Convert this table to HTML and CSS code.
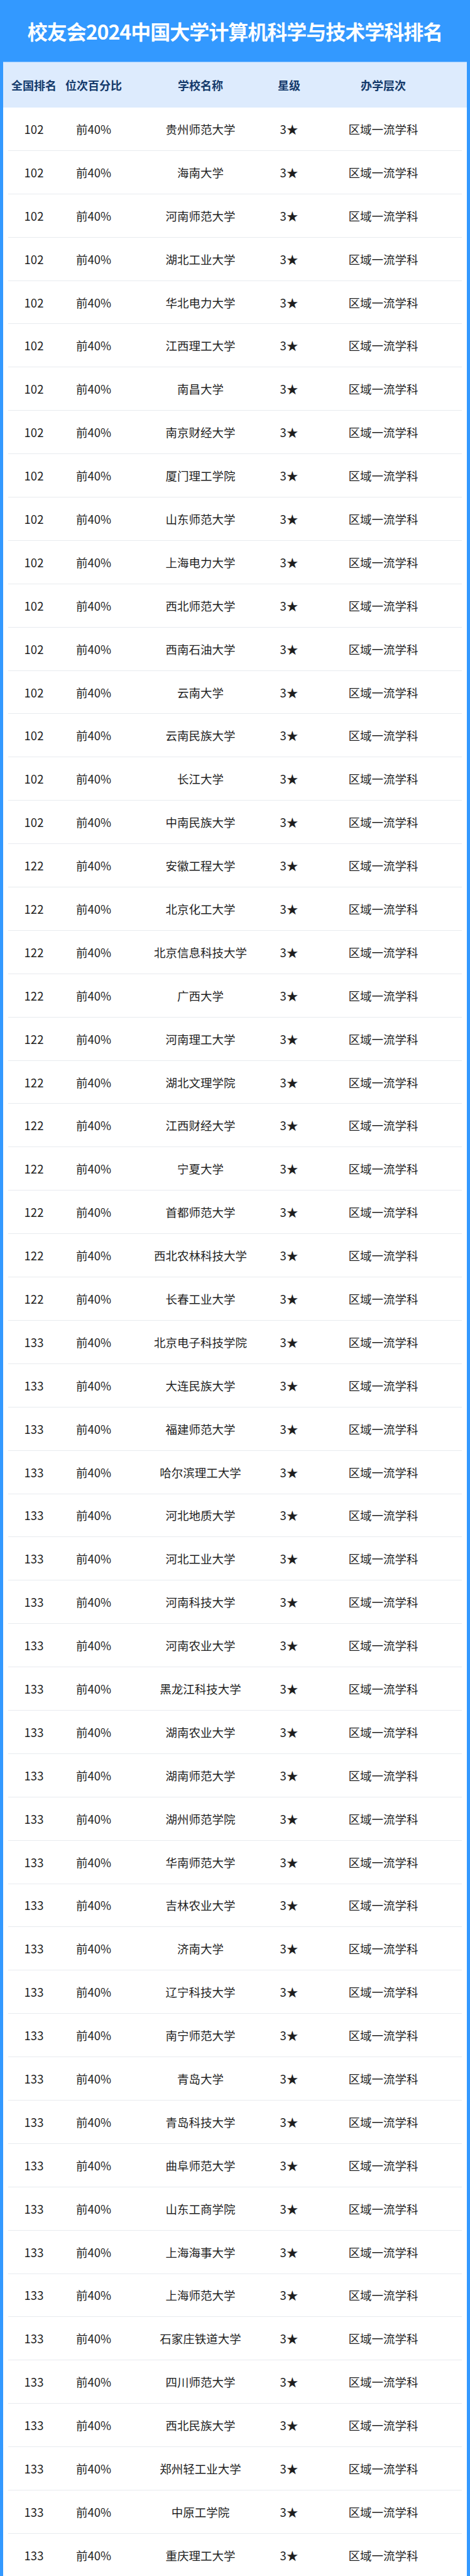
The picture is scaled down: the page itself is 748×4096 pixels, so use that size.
FILE: index.html
```html
<!DOCTYPE html>
<html lang="zh-CN">
<head>
<meta charset="utf-8">
<title>校友会2024中国大学计算机科学与技术学科排名</title>
<link rel="stylesheet" href="styles.css">
</head>
<body>
<div class="frame">
  <h1 class="title">校友会2024中国大学计算机科学与技术学科排名</h1>
  <div class="panel">
    <div class="thead">
      <div class="grid">
        <span>全国排名</span><span>位次百分比</span><span>学校名称</span><span>星级</span><span>办学层次</span>
      </div>
    </div>
    <div class="tbody">
      <div class="grid row"><span>102</span><span>前40%</span><span>贵州师范大学</span><span>3★</span><span>区域一流学科</span></div>
      <div class="grid row"><span>102</span><span>前40%</span><span>海南大学</span><span>3★</span><span>区域一流学科</span></div>
      <div class="grid row"><span>102</span><span>前40%</span><span>河南师范大学</span><span>3★</span><span>区域一流学科</span></div>
      <div class="grid row"><span>102</span><span>前40%</span><span>湖北工业大学</span><span>3★</span><span>区域一流学科</span></div>
      <div class="grid row"><span>102</span><span>前40%</span><span>华北电力大学</span><span>3★</span><span>区域一流学科</span></div>
      <div class="grid row"><span>102</span><span>前40%</span><span>江西理工大学</span><span>3★</span><span>区域一流学科</span></div>
      <div class="grid row"><span>102</span><span>前40%</span><span>南昌大学</span><span>3★</span><span>区域一流学科</span></div>
      <div class="grid row"><span>102</span><span>前40%</span><span>南京财经大学</span><span>3★</span><span>区域一流学科</span></div>
      <div class="grid row"><span>102</span><span>前40%</span><span>厦门理工学院</span><span>3★</span><span>区域一流学科</span></div>
      <div class="grid row"><span>102</span><span>前40%</span><span>山东师范大学</span><span>3★</span><span>区域一流学科</span></div>
      <div class="grid row"><span>102</span><span>前40%</span><span>上海电力大学</span><span>3★</span><span>区域一流学科</span></div>
      <div class="grid row"><span>102</span><span>前40%</span><span>西北师范大学</span><span>3★</span><span>区域一流学科</span></div>
      <div class="grid row"><span>102</span><span>前40%</span><span>西南石油大学</span><span>3★</span><span>区域一流学科</span></div>
      <div class="grid row"><span>102</span><span>前40%</span><span>云南大学</span><span>3★</span><span>区域一流学科</span></div>
      <div class="grid row"><span>102</span><span>前40%</span><span>云南民族大学</span><span>3★</span><span>区域一流学科</span></div>
      <div class="grid row"><span>102</span><span>前40%</span><span>长江大学</span><span>3★</span><span>区域一流学科</span></div>
      <div class="grid row"><span>102</span><span>前40%</span><span>中南民族大学</span><span>3★</span><span>区域一流学科</span></div>
      <div class="grid row"><span>122</span><span>前40%</span><span>安徽工程大学</span><span>3★</span><span>区域一流学科</span></div>
      <div class="grid row"><span>122</span><span>前40%</span><span>北京化工大学</span><span>3★</span><span>区域一流学科</span></div>
      <div class="grid row"><span>122</span><span>前40%</span><span>北京信息科技大学</span><span>3★</span><span>区域一流学科</span></div>
      <div class="grid row"><span>122</span><span>前40%</span><span>广西大学</span><span>3★</span><span>区域一流学科</span></div>
      <div class="grid row"><span>122</span><span>前40%</span><span>河南理工大学</span><span>3★</span><span>区域一流学科</span></div>
      <div class="grid row"><span>122</span><span>前40%</span><span>湖北文理学院</span><span>3★</span><span>区域一流学科</span></div>
      <div class="grid row"><span>122</span><span>前40%</span><span>江西财经大学</span><span>3★</span><span>区域一流学科</span></div>
      <div class="grid row"><span>122</span><span>前40%</span><span>宁夏大学</span><span>3★</span><span>区域一流学科</span></div>
      <div class="grid row"><span>122</span><span>前40%</span><span>首都师范大学</span><span>3★</span><span>区域一流学科</span></div>
      <div class="grid row"><span>122</span><span>前40%</span><span>西北农林科技大学</span><span>3★</span><span>区域一流学科</span></div>
      <div class="grid row"><span>122</span><span>前40%</span><span>长春工业大学</span><span>3★</span><span>区域一流学科</span></div>
      <div class="grid row"><span>133</span><span>前40%</span><span>北京电子科技学院</span><span>3★</span><span>区域一流学科</span></div>
      <div class="grid row"><span>133</span><span>前40%</span><span>大连民族大学</span><span>3★</span><span>区域一流学科</span></div>
      <div class="grid row"><span>133</span><span>前40%</span><span>福建师范大学</span><span>3★</span><span>区域一流学科</span></div>
      <div class="grid row"><span>133</span><span>前40%</span><span>哈尔滨理工大学</span><span>3★</span><span>区域一流学科</span></div>
      <div class="grid row"><span>133</span><span>前40%</span><span>河北地质大学</span><span>3★</span><span>区域一流学科</span></div>
      <div class="grid row"><span>133</span><span>前40%</span><span>河北工业大学</span><span>3★</span><span>区域一流学科</span></div>
      <div class="grid row"><span>133</span><span>前40%</span><span>河南科技大学</span><span>3★</span><span>区域一流学科</span></div>
      <div class="grid row"><span>133</span><span>前40%</span><span>河南农业大学</span><span>3★</span><span>区域一流学科</span></div>
      <div class="grid row"><span>133</span><span>前40%</span><span>黑龙江科技大学</span><span>3★</span><span>区域一流学科</span></div>
      <div class="grid row"><span>133</span><span>前40%</span><span>湖南农业大学</span><span>3★</span><span>区域一流学科</span></div>
      <div class="grid row"><span>133</span><span>前40%</span><span>湖南师范大学</span><span>3★</span><span>区域一流学科</span></div>
      <div class="grid row"><span>133</span><span>前40%</span><span>湖州师范学院</span><span>3★</span><span>区域一流学科</span></div>
      <div class="grid row"><span>133</span><span>前40%</span><span>华南师范大学</span><span>3★</span><span>区域一流学科</span></div>
      <div class="grid row"><span>133</span><span>前40%</span><span>吉林农业大学</span><span>3★</span><span>区域一流学科</span></div>
      <div class="grid row"><span>133</span><span>前40%</span><span>济南大学</span><span>3★</span><span>区域一流学科</span></div>
      <div class="grid row"><span>133</span><span>前40%</span><span>辽宁科技大学</span><span>3★</span><span>区域一流学科</span></div>
      <div class="grid row"><span>133</span><span>前40%</span><span>南宁师范大学</span><span>3★</span><span>区域一流学科</span></div>
      <div class="grid row"><span>133</span><span>前40%</span><span>青岛大学</span><span>3★</span><span>区域一流学科</span></div>
      <div class="grid row"><span>133</span><span>前40%</span><span>青岛科技大学</span><span>3★</span><span>区域一流学科</span></div>
      <div class="grid row"><span>133</span><span>前40%</span><span>曲阜师范大学</span><span>3★</span><span>区域一流学科</span></div>
      <div class="grid row"><span>133</span><span>前40%</span><span>山东工商学院</span><span>3★</span><span>区域一流学科</span></div>
      <div class="grid row"><span>133</span><span>前40%</span><span>上海海事大学</span><span>3★</span><span>区域一流学科</span></div>
      <div class="grid row"><span>133</span><span>前40%</span><span>上海师范大学</span><span>3★</span><span>区域一流学科</span></div>
      <div class="grid row"><span>133</span><span>前40%</span><span>石家庄铁道大学</span><span>3★</span><span>区域一流学科</span></div>
      <div class="grid row"><span>133</span><span>前40%</span><span>四川师范大学</span><span>3★</span><span>区域一流学科</span></div>
      <div class="grid row"><span>133</span><span>前40%</span><span>西北民族大学</span><span>3★</span><span>区域一流学科</span></div>
      <div class="grid row"><span>133</span><span>前40%</span><span>郑州轻工业大学</span><span>3★</span><span>区域一流学科</span></div>
      <div class="grid row"><span>133</span><span>前40%</span><span>中原工学院</span><span>3★</span><span>区域一流学科</span></div>
      <div class="grid row"><span>133</span><span>前40%</span><span>重庆理工大学</span><span>3★</span><span>区域一流学科</span></div>
    </div>
  </div>
</div>
</body>
</html>
```

FILE: styles.css
```css
html, body {
  margin: 0;
  padding: 0;
  background: #3399ff;
}
body {
  font-family: "Noto Sans CJK SC", "Noto Sans", sans-serif;
  width: 748px;
  overflow: hidden;
}
.frame {
  background: #3399ff;
  padding: 0 5px;
  min-height: 4096px;
}
.title {
  margin: 0;
  height: 98px;
  display: flex;
  align-items: center;
  justify-content: center;
  color: #ffffff;
  font-size: 32px;
  font-weight: 700;
  letter-spacing: -1px;
  white-space: nowrap;
}
.panel {
  background: #ffffff;
  min-height: 3998px;
}
.thead {
  background: #ddebfd;
  border-top: 1px solid #8cc4ff;
  height: 72px;
  display: flex;
  align-items: center;
  padding: 0 8px;
}
.thead .grid {
  width: 100%;
  color: #143a6b;
  font-size: 18px;
  font-weight: 700;
}
.tbody {
  padding: 0 8px;
}
.grid {
  display: grid;
  grid-template-columns: 82px 108px 232px 50px 1fr;
  align-items: center;
  text-align: center;
  white-space: nowrap;
}
.row {
  height: 67.9px;
  border-bottom: 1px solid #e8ebef;
  color: #1e1e1e;
  font-size: 18.5px;
  font-weight: 400;
}
```
